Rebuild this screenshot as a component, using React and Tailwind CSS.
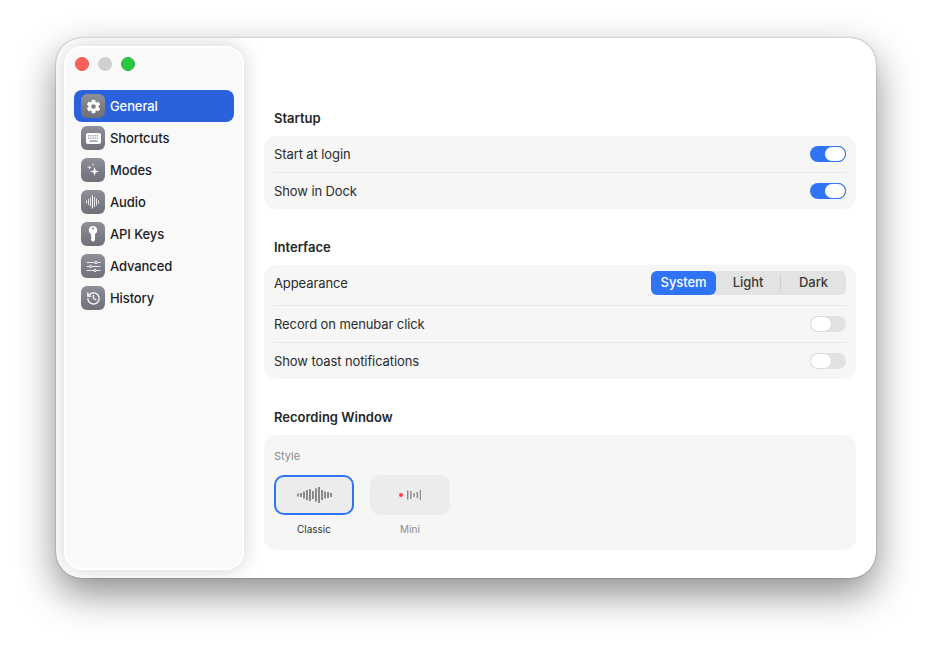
import { History } from 'lucide-react';
import { IoSettingsSharp } from 'react-icons/io5';

const GearIcon = () => <IoSettingsSharp className="w-[15px] h-[15px] text-white" />;

const KeyboardIcon = () => (
  <svg width="15" height="11" viewBox="0 0 15 11">
    <rect x="0" y="0" width="15" height="11" rx="2" fill="#fff" />
    {[2, 4.2, 6.4, 8.6, 10.8].map((x) => (
      <g key={x} fill="#8a8a94">
        <rect x={x} y="2.2" width="1.2" height="1.2" />
        <rect x={x} y="4.6" width="1.2" height="1.2" />
      </g>
    ))}
    <rect x="3.5" y="7.4" width="8" height="1.3" fill="#8a8a94" />
  </svg>
);

const SparkleIcon = () => (
  <svg width="16" height="16" viewBox="0 0 16 16" fill="#fff">
    <path d="M9.5 5 L10.6 8.4 L14 9.5 L10.6 10.6 L9.5 14 L8.4 10.6 L5 9.5 L8.4 8.4 Z" />
    <path d="M4.5 3 L5.1 4.9 L7 5.5 L5.1 6.1 L4.5 8 L3.9 6.1 L2 5.5 L3.9 4.9 Z" opacity="0.8" />
    <circle cx="8" cy="2.6" r="0.8" opacity="0.8" />
  </svg>
);

const AudioIcon = () => (
  <svg width="14" height="14" viewBox="0 0 14 14" fill="#fff">
    {[3, 6, 9, 13, 10, 7, 3].map((h, i) => (
      <rect key={i} x={i * 2} y={7 - h / 2} width="1" height={h} opacity={i === 3 ? 1 : 0.8} />
    ))}
  </svg>
);

const KeyIcon = () => (
  <svg width="16" height="18" viewBox="0 0 16 18" fill="#fff">
    <path fillRule="evenodd" d="M8 1a4.2 4.2 0 0 1 2 7.9V15l-2 2-2-2v-1.2l1-.9-1-.9V8.9A4.2 4.2 0 0 1 8 1Zm0 1.5a1 1 0 1 0 0 2 1 1 0 0 0 0-2Z" />
  </svg>
);

const AdvancedIcon = () => (
  <svg width="15" height="13" viewBox="0 0 15 13" fill="#fff" stroke="#fff" strokeWidth="1">
    <path d="M0.5 2.5H14.5M0.5 6.5H14.5M0.5 10.5H14.5" opacity="0.8" fill="none" />
    <circle cx="10" cy="2.5" r="1.2" fill="#7f7f89" />
    <circle cx="4.5" cy="6.5" r="1.2" fill="#7f7f89" />
    <circle cx="9" cy="10.5" r="1.2" fill="#7f7f89" />
  </svg>
);

const nav = [
  { label: 'General', icon: <GearIcon />, active: true },
  { label: 'Shortcuts', icon: <KeyboardIcon /> },
  { label: 'Modes', icon: <SparkleIcon /> },
  { label: 'Audio', icon: <AudioIcon /> },
  { label: 'API Keys', icon: <KeyIcon /> },
  { label: 'Advanced', icon: <AdvancedIcon /> },
  { label: 'History', icon: <History className="w-[15px] h-[15px] text-white" strokeWidth={2} /> },
];

function Toggle({ on }) {
  return (
    <div className={`w-9 h-4 rounded-full flex ${on ? 'bg-[#2f74f5] justify-end' : 'bg-[#e2e2e2] justify-start'}`}>
      <div className={`w-[22px] h-4 rounded-full bg-white border ${on ? 'border-[#2f74f5]' : 'border-[#dcdcdc]'}`} />
    </div>
  );
}

function Row({ label, on, last }) {
  return (
    <div className={`flex items-center justify-between ${last ? 'h-9' : 'h-[37px] border-b border-[#e9e9e9]'}`}>
      <span className="text-[13px] tracking-[-0.1px] pt-px text-[#2b2b2b]">{label}</span>
      <Toggle on={on} />
    </div>
  );
}

function Heading({ children }) {
  return <h2 className="ml-[10px] h-[18px] leading-[18px] text-[13px] font-semibold text-[#262626] mb-[9px]">{children}</h2>;
}

function Bars({ bars, step = 3, width = 2 }) {
  const total = (bars.length - 1) * step + width;
  return (
    <svg width={total} height="18" viewBox={`0 0 ${total} 18`}>
      {bars.map((h, i) => (
        <rect key={i} x={i * step} y={9 - h / 2} width={width} height={h} fill="#8a8a8a" />
      ))}
    </svg>
  );
}

export default function App() {
  return (
    <div className="w-[932px] h-[652px] bg-white pt-[38px] pl-[56px] font-['Inter','Liberation_Sans',sans-serif]">
      <div className="w-[820px] h-[540px] rounded-[26px] bg-white flex p-2 overflow-hidden shadow-[0_0_1.5px_rgba(0,0,0,0.5),0_16px_38px_rgba(0,0,0,0.45)]">
        <aside className="w-[180px] h-full shrink-0 rounded-[18px] bg-[#f9f9f9] border-2 border-white shadow-[0_0_20px_rgba(0,0,0,0.18)] px-2">
          <div className="flex gap-[9px] pt-[9px] pl-[1px] h-[42px]">
            <span className="w-[14px] h-[14px] rounded-full bg-[#ff5f57] border border-[#e5534c]" />
            <span className="w-[14px] h-[14px] rounded-full bg-[#d0d0d0]" />
            <span className="w-[14px] h-[14px] rounded-full bg-[#28c840] border border-[#22b338]" />
          </div>
          <nav>
            {nav.map((item) => (
              <div key={item.label} className={`h-8 flex items-center gap-[5px] pl-[7px] rounded-lg ${item.active ? 'bg-[#2a62de] text-white' : 'text-[#1d1d1f]'}`}>
                <span className="w-6 h-6 rounded-[6px] flex items-center justify-center bg-gradient-to-b from-[#8f8f99] to-[#6f6f79]">
                  {item.icon}
                </span>
                <span className="text-[13px] font-medium tracking-[-0.1px] pt-px">{item.label}</span>
              </div>
            ))}
          </nav>
        </aside>

        <main className="flex-1 pl-5 pr-3 pt-[63px]">
          <Heading>Startup</Heading>
          <section className="bg-[#f6f6f6] rounded-xl px-[10px] h-[73px]">
            <Row label="Start at login" on />
            <Row label="Show in Dock" on last />
          </section>

          <div className="h-[29px]" />
          <Heading>Interface</Heading>
          <section className="bg-[#f6f6f6] rounded-xl px-[10px] h-[114px]">
            <div className="h-[41px] pt-[6px] flex items-start justify-between border-b border-[#e9e9e9]">
              <span className="text-[13px] leading-6 tracking-[-0.1px] text-[#2b2b2b]">Appearance</span>
              <div className="w-[195px] h-6 rounded-md bg-[#e3e3e3] flex items-center text-[13px] font-medium tracking-[-0.1px] text-[#3a3a3a]">
                <div className="w-[65px] h-6 rounded-md bg-[#2f74f5] text-white flex items-center justify-center">System</div>
                <div className="w-[65px] h-4 flex items-center justify-center border-r border-[#cfcfcf]">Light</div>
                <div className="flex-1 flex items-center justify-center">Dark</div>
              </div>
            </div>
            <Row label="Record on menubar click" />
            <Row label="Show toast notifications" last />
          </section>

          <div className="h-[29px]" />
          <Heading>Recording Window</Heading>
          <section className="bg-[#f6f6f6] rounded-xl px-[10px] pt-[14px] h-[115px]">
            <div className="text-[11px] leading-[14px] text-[#8a8a8a] mb-[12px]">Style</div>
            <div className="flex gap-4">
              <div className="w-20">
                <div className="h-10 rounded-[10px] bg-[#ececec] border-2 border-[#2f74f5] flex items-center justify-center">
                  <Bars bars={[3, 4, 7, 10, 12, 8, 13, 16, 10, 7, 6, 4]} />
                </div>
                <div className="mt-[8px] text-center text-[10px] leading-[12px] text-[#333]">Classic</div>
              </div>
              <div className="w-20">
                <div className="h-10 rounded-[10px] bg-[#ececec] flex items-center justify-center gap-[4px]">
                  <span className="w-1 h-1 rounded-full bg-[#ff4040]" />
                  <Bars bars={[9, 8, 4, 6, 10]} step={3.2} width={1.4} />
                </div>
                <div className="mt-[8px] text-center text-[10px] leading-[12px] text-[#8a8a8a]">Mini</div>
              </div>
            </div>
          </section>
        </main>
      </div>
    </div>
  );
}
